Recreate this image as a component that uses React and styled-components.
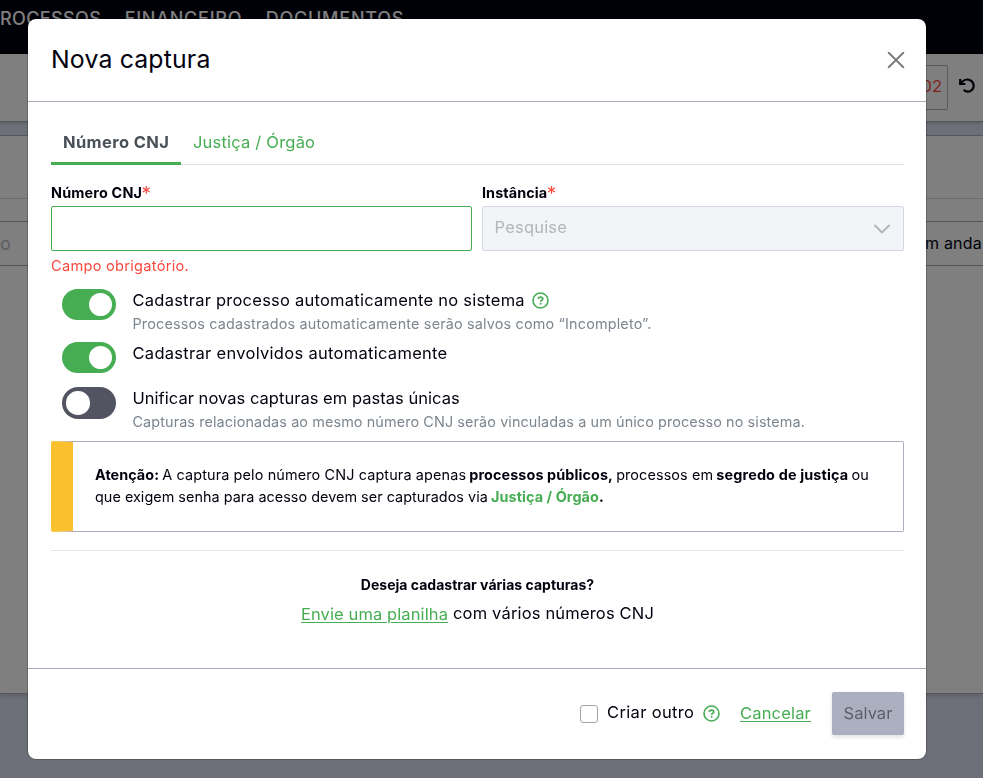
import React from "react";
import styled, { createGlobalStyle } from "styled-components";

const GREEN = "#46ad53";
const INK = "#02020f";
const RED = "#f9493f";

const GlobalStyle = createGlobalStyle`
  * { box-sizing: border-box; }
  body {
    margin: 0;
    overflow: hidden;
    color: ${INK};
    font-family: Inter, "Open Sans", sans-serif;
    font-size: 16.5px;
  }
`;

/* Letter-spaced run of text, spacing given in px */
const Run = styled.span`
  letter-spacing: ${(p) => p.$ls || 0}px;
  white-space: pre;
`;
const StrongRun = styled(Run)`
  font-weight: 700;
  color: ${(p) => (p.$green ? GREEN : INK)};
`;

/* ---------- page behind the dialog ---------- */
const Page = styled.div`
  height: 778px;
  width: 983px;
  overflow: hidden;
  display: flex;
  flex-direction: column;
  background: #d8dfef;
`;
const Nav = styled.nav`
  flex: none;
  height: 54px;
  padding-top: 6px;
  background: #00000f;
  color: #fff;
  font-size: 18px;
  font-weight: 500;
  line-height: 25px;
  display: flex;
  gap: 23.5px;
  margin-left: -14px;
  padding-left: 2px;
`;
const FilterBar = styled.div`
  flex: none;
  height: 68px;
  background: #fff;
  border-bottom: 1px solid #abafbf;
  box-shadow: 0 1px 3px rgba(0, 0, 0, 0.2);
  display: flex;
  justify-content: flex-end;
  align-items: flex-start;
  padding: 11px 7px 0 0;
  gap: 10px;
`;
const DateBox = styled.div`
  width: 120px;
  height: 45px;
  border: 1px solid #b4b4bc;
  border-radius: 2px;
  color: ${RED};
  text-align: right;
  line-height: 41px;
  padding-right: 5px;
`;
const Undo = styled.svg`
  width: 18px;
  height: 18px;
  margin-top: 12px;
`;
const Panel = styled.section`
  flex: none;
  margin-top: 13px;
  height: 559px;
  background: #fff;
  border: solid #abafbf;
  border-width: 1px 0;
  box-shadow: 0 2px 4px rgba(0, 0, 0, 0.15);
`;
const PanelHead = styled.div`
  height: 63px;
  border-bottom: 1px solid #d5d7dd;
`;
const PanelGap = styled.div`
  height: 22px;
`;
const PanelFields = styled.div`
  height: 45px;
  border: solid #a5a8b8;
  border-width: 1px 0;
  line-height: 43px;
  display: flex;
  justify-content: space-between;
`;
const Faint = styled.span`
  color: #b9bbc2;
  font-size: 18px;
`;
const Status = styled.span`
  width: 58px;
  white-space: nowrap;
  font-size: 16px;
`;

/* ---------- dialog ---------- */
const Overlay = styled.div`
  position: fixed;
  inset: 0;
  background: rgba(0, 0, 0, 0.5);
  padding: 19px 57px 19px 28px;
`;
const Dialog = styled.div`
  height: 740px;
  background: #fff;
  border-radius: 8px;
  outline: 1px solid rgba(0, 0, 0, 0.2);
  display: flex;
  flex-direction: column;
`;
const Header = styled.header`
  height: 83px;
  flex: none;
  border-bottom: 1px solid #abadbd;
  padding: 0 21px 0 23px;
  display: flex;
  justify-content: space-between;
  align-items: center;
`;
const Title = styled.h1`
  margin: 0 0 3px;
  font-size: 24.8px;
  line-height: 32px;
  font-weight: 400;
`;
const CloseIcon = styled.svg`
  width: 18px;
  height: 18px;
`;
const Body = styled.main`
  flex: 1;
  padding: 20px 22px 0 23px;
`;
const Tabs = styled.div`
  display: flex;
  height: 43px;
  border-bottom: 1px solid #dcdee4;
`;
const Tab = styled.div`
  height: 43px;
  padding: 0 12px;
  line-height: 41px;
  border-bottom: 3px solid ${(p) => (p.$active ? GREEN : "transparent")};
  border-radius: 2px 2px 0 0;
  color: ${(p) => (p.$active ? "#495057" : GREEN)};
  font-weight: ${(p) => (p.$active ? 700 : 400)};
  width: ${(p) => (p.$active ? "130px" : "auto")};
`;
const Fields = styled.div`
  display: grid;
  grid-template-columns: 421px 422px;
  column-gap: 10px;
  padding-top: 17px;
`;
const Label = styled.label`
  display: flex;
  height: 24px;
  line-height: 22px;
  font-size: 14.4px;
  font-weight: 700;
`;
const Required = styled.span`
  color: ${RED};
  font-size: 19px;
  font-weight: 400;
  line-height: 23px;
  margin-left: -0.5px;
`;
const Control = styled.div`
  height: 45px;
  border: 1px solid ${(p) => (p.$disabled ? "#d4d7e1" : GREEN)};
  border-radius: 2px;
  background: ${(p) => (p.$disabled ? "#f3f4f7" : "#fff")};
  color: #b4b5b9;
  line-height: 41px;
  padding: 0 12px 2px 11.5px;
  display: flex;
  justify-content: space-between;
  align-items: center;
`;
const Chevron = styled.svg`
  width: 18px;
  height: 12px;
  margin-top: 2px;
`;
const ErrorText = styled.div`
  height: 38px;
  line-height: 30px;
  font-size: 14.6px;
  color: ${RED};
`;
const Option = styled.div`
  display: flex;
  height: ${(p) => p.$h}px;
  padding-left: 11px;
  gap: 16.5px;
`;
const Switch = styled.div`
  width: 54px;
  height: ${(p) => (p.$on ? 31 : 32)}px;
  border-radius: 16px;
  background: ${(p) => (p.$on ? GREEN : "#525561")};
  padding: 4px;
  display: flex;
  align-items: center;
  justify-content: ${(p) => (p.$on ? "flex-end" : "flex-start")};
`;
const Knob = styled.i`
  width: 23.5px;
  height: 23.5px;
  border-radius: 50%;
  background: #fff;
`;
const OptionLabel = styled.div`
  display: flex;
  align-items: center;
  gap: 7.5px;
  height: 23px;
  line-height: 23px;
`;
const Hint = styled.div`
  font-size: 14.4px;
  line-height: 24px;
  color: #7d868f;
`;
const Notice = styled.div`
  height: 91px;
  border: 1px solid #abadbd;
  border-left: 22px solid #fbc02e;
  border-radius: 2px;
  padding: 22px 0 0 22px;
  font-size: 14.4px;
  line-height: 22px;
`;
const Line = styled.div`
  display: flex;
  gap: 3.2px;
`;
const Bulk = styled.div`
  margin-top: 18px;
  border-top: 1px solid #e6e6e8;
  padding-top: 23px;
  display: flex;
  flex-direction: column;
  align-items: center;
`;
const Question = styled.div`
  font-size: 14px;
  line-height: 22px;
  font-weight: 700;
`;
const BulkLine = styled.div`
  display: flex;
  gap: 5px;
  margin-top: 5px;
  line-height: 24px;
`;
const Link = styled.a`
  color: ${GREEN};
  text-decoration: underline;
  text-decoration-thickness: 1px;
  text-underline-offset: 2px;
`;
const SheetLink = styled(Link)`
  padding-top: 1px;
`;
const Footer = styled.footer`
  height: 91px;
  flex: none;
  border-top: 1px solid #abadbd;
  padding: 23px 22px 0 0;
  display: flex;
  justify-content: flex-end;
`;
const FooterItems = styled.div`
  display: flex;
  align-items: center;
  height: 43px;
`;
const Checkbox = styled.span`
  width: 18px;
  height: 18px;
  border: 1px solid #a4a4a8;
  border-radius: 3px;
  margin-right: 9px;
`;
const CheckLabel = styled.span`
  width: 96px;
  margin-top: -3px;
`;
const Cancel = styled(Link)`
  width: 71px;
  margin: -1px 21px 0 20px;
`;
const Save = styled.button`
  width: 72px;
  height: 43px;
  border: 0;
  border-radius: 2px;
  background: #abafbf;
  color: #5b5e6d;
  font: inherit;
  padding: 0 0 2px;
  box-shadow: 0 2px 4px rgba(0, 0, 0, 0.13);
`;
const HelpSvg = styled.svg`
  width: 17px;
  height: 17px;
  flex: none;
`;

const Help = () => (
  <HelpSvg viewBox="0 0 17 17" fill="none" stroke={GREEN}>
    <circle cx="8.5" cy="8.5" r="7.5" strokeWidth="1.6" />
    <path d="M6.2 6.9C6.3 5.7 7.2 5.1 8.5 5.1s2.3.7 2.3 1.8c0 1.4-2.2 1.4-2.2 2.9" strokeWidth="1.7" />
    <circle cx="8.6" cy="11.7" r="1" fill={GREEN} stroke="none" />
  </HelpSvg>
);

export default function App() {
  return (
    <>
      <GlobalStyle />
      <Page>
        <Nav>
          <Run $ls={0.4}>PROCESSOS</Run>
          <Run $ls={0.75}>FINANCEIRO</Run>
          <Run $ls={0.75}>DOCUMENTOS</Run>
        </Nav>
        <FilterBar>
          <DateBox>2002</DateBox>
          <Undo viewBox="0 0 18 18" fill="none" stroke={INK} strokeWidth="2.2">
            <path d="M2.2 2v5h5.2" />
            <path d="M2.8 6.6C5 3 9 1.7 12.5 3.4c4 2 4.2 8 .6 10.2-2.4 1.5-5.4 1.2-7.4-.8" />
          </Undo>
        </FilterBar>
        <Panel>
          <PanelHead />
          <PanelGap />
          <PanelFields>
            <Faint>o</Faint>
            <Status><Run $ls={0.2}>m anda</Run></Status>
          </PanelFields>
        </Panel>
      </Page>
      <Overlay>
        <Dialog>
          <Header>
            <Title><Run $ls={0.18}>Nova captura</Run></Title>
            <CloseIcon viewBox="0 0 18 18" stroke="#7d7d7d" strokeWidth="2" strokeLinecap="round">
              <path d="M1.7 1.7l14.6 14.6M16.3 1.7L1.7 16.3" />
            </CloseIcon>
          </Header>
          <Body>
            <Tabs>
              <Tab $active><Run $ls={0.38}>Número CNJ</Run></Tab>
              <Tab><Run $ls={0.2}>Justiça / Órgão</Run></Tab>
            </Tabs>
            <Fields>
              <div>
                <Label><Run $ls={0.17}>Número CNJ</Run><Required>*</Required></Label>
                <Control />
                <ErrorText><Run $ls={0.27}>Campo obrigatório.</Run></ErrorText>
              </div>
              <div>
                <Label><Run $ls={0.08}>Instância</Run><Required>*</Required></Label>
                <Control $disabled>
                  <Run $ls={0.2}>Pesquise</Run>
                  <Chevron viewBox="0 0 18 12" fill="none" stroke="#b4b5b9" strokeWidth="2" strokeLinecap="round" strokeLinejoin="round">
                    <path d="M2 2.5l7 7 7-7" />
                  </Chevron>
                </Control>
              </div>
            </Fields>
            <Option $h={53}>
              <Switch $on><Knob /></Switch>
              <div>
                <OptionLabel><Run $ls={0.235}>Cadastrar processo automaticamente no sistema</Run><Help /></OptionLabel>
                <Hint><Run $ls={0.17}>Processos cadastrados automaticamente serão salvos como “Incompleto”.</Run></Hint>
              </div>
            </Option>
            <Option $h={45}>
              <Switch $on><Knob /></Switch>
              <OptionLabel><Run $ls={0.29}>Cadastrar envolvidos automaticamente</Run></OptionLabel>
            </Option>
            <Option $h={54}>
              <Switch><Knob /></Switch>
              <div>
                <OptionLabel><Run $ls={0.03}>Unificar novas capturas em pastas únicas</Run></OptionLabel>
                <Hint><Run $ls={0.105}>Capturas relacionadas ao mesmo número CNJ serão vinculadas a um único processo no sistema.</Run></Hint>
              </div>
            </Option>
            <Notice>
              <Line>
                <StrongRun $ls={0.05}>Atenção:</StrongRun>
                <Run $ls={0.14}>A captura pelo número CNJ captura apenas</Run>
                <StrongRun $ls={0.09}>processos públicos,</StrongRun>
                <Run $ls={0.11}>processos em</Run>
                <StrongRun $ls={0.15}>segredo de justiça</StrongRun>
                <Run $ls={0.1}>ou</Run>
              </Line>
              <Line>
                <Run $ls={0.03}>que exigem senha para acesso devem ser capturados via</Run>
                <StrongRun $green $ls={0.07}>Justiça / Órgão<StrongRun>.</StrongRun></StrongRun>
              </Line>
            </Notice>
            <Bulk>
              <Question><Run $ls={0.02}>Deseja cadastrar várias capturas?</Run></Question>
              <BulkLine>
                <SheetLink><Run $ls={0.1}>Envie uma planilha</Run></SheetLink>
                <Run $ls={0.17}>com vários números CNJ</Run>
              </BulkLine>
            </Bulk>
          </Body>
          <Footer>
            <FooterItems>
              <Checkbox />
              <CheckLabel><Run $ls={0.35}>Criar outro</Run></CheckLabel>
              <Help />
              <Cancel><Run $ls={0.17}>Cancelar</Run></Cancel>
              <Save><Run $ls={0.05}>Salvar</Run></Save>
            </FooterItems>
          </Footer>
        </Dialog>
      </Overlay>
    </>
  );
}
